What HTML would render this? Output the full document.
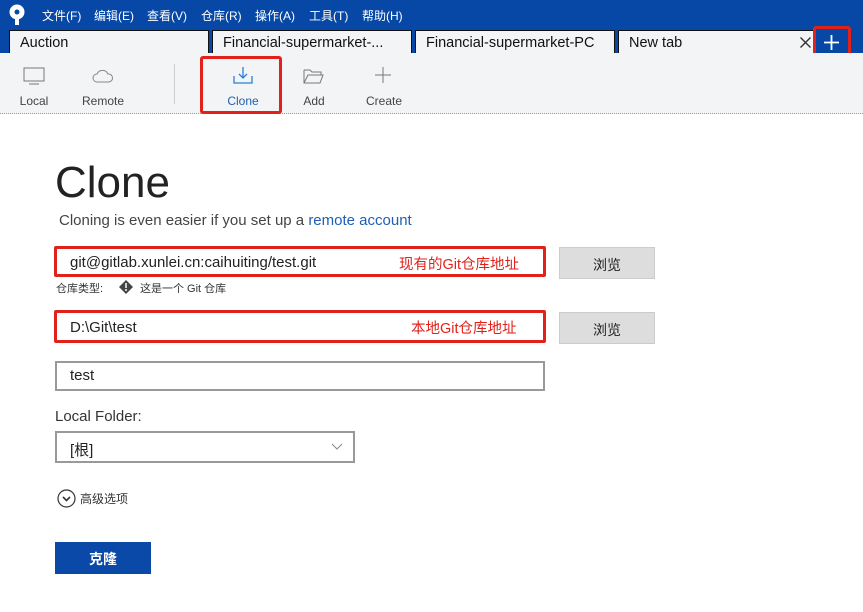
<!DOCTYPE html>
<html><head><meta charset="utf-8">
<style>
*{margin:0;padding:0;box-sizing:border-box}
body{width:863px;height:612px;background:#fff;font-family:"Liberation Sans","Noto Sans CJK SC",sans-serif;position:relative;overflow:hidden;color:#222}
.abs{position:absolute}
#top{left:0;top:0;width:863px;height:53px;background:#0747a6}
.menu{top:7px;font-size:12px;color:#fff}
.tab{top:30px;height:23px;background:#f3f4f6;border:1px solid #111;border-bottom:none;font-size:14.5px;padding:4px 0 0 10px;color:#111}
#tb{left:0;top:53px;width:863px;height:61px;background:#f3f4f6;border-bottom:1px dotted #999}
.tl{font-size:12px;color:#444;top:94px;text-align:center;width:60px}
.inp{border:2px solid #999;background:#fff;font-size:15px;padding:4px 0 0 13px;height:30px}
.red{border:3px solid #e0221b;border-radius:2px}
.btn{background:#ddd;border:1px solid #ccc;font-size:14px;text-align:center;padding-top:7px;width:96px;height:32px}
.ann{color:#e0221b;font-size:14.5px}
</style></head><body>
<div id="top" class="abs"></div>
<svg class="abs" style="left:8px;top:4px" width="18" height="22" viewBox="0 0 18 22"><circle cx="9" cy="8" r="7.5" fill="#fff"/><circle cx="9" cy="8" r="2.5" fill="#0747a6"/><rect x="7" y="13" width="4" height="8" fill="#fff"/></svg>
<div class="abs menu" style="left:42px">文件(F)</div>
<div class="abs menu" style="left:94px">编辑(E)</div>
<div class="abs menu" style="left:147px">查看(V)</div>
<div class="abs menu" style="left:201px">仓库(R)</div>
<div class="abs menu" style="left:255px">操作(A)</div>
<div class="abs menu" style="left:309px">工具(T)</div>
<div class="abs menu" style="left:362px">帮助(H)</div>
<div class="abs tab" style="left:9px;width:200px">Auction</div>
<div class="abs tab" style="left:212px;width:200px">Financial-supermarket-...</div>
<div class="abs tab" style="left:415px;width:200px">Financial-supermarket-PC</div>
<div class="abs tab" style="left:618px;width:197px;background:#f3f4f6">New tab</div>
<svg class="abs" style="left:800px;top:37px" width="11" height="11"><path d="M0.5 0.5l10 10M10.5 0.5l-10 10" stroke="#333" stroke-width="1.4"/></svg>
<div class="abs" style="left:813px;top:26px;width:38px;height:31px;border:3px solid #e0221b;border-radius:3px"></div>
<svg class="abs" style="left:824px;top:35px" width="15" height="15"><path d="M7.5 0v15M0 7.5h15" stroke="#fff" stroke-width="1.8"/></svg>
<div id="tb" class="abs"></div>
<svg class="abs" style="left:23px;top:67px" width="22" height="20"><rect x="1" y="1" width="20" height="13" fill="none" stroke="#777"/><line x1="6" y1="17" x2="16" y2="17" stroke="#777"/></svg>
<svg class="abs" style="left:92px;top:68px" width="22" height="16"><path d="M5 14 a4 4 0 0 1 0-8 a6 6 0 0 1 11 0 a4 4 0 0 1 1 8 z" fill="none" stroke="#888"/></svg>
<div class="abs tl" style="left:4px">Local</div>
<div class="abs tl" style="left:73px">Remote</div>
<div class="abs" style="left:174px;top:64px;width:1px;height:40px;background:#ccc"></div>
<div class="abs" style="left:200px;top:56px;width:82px;height:58px;border:3px solid #e0221b;border-radius:3px"></div>
<svg class="abs" style="left:233px;top:66px" width="20" height="18"><path d="M10 1v11M6 8l4 4 4-4M1 10v7h18v-7" fill="none" stroke="#2a7fd4" stroke-width="1.3"/></svg>
<div class="abs tl" style="left:213px;color:#1f5fb3">Clone</div>
<svg class="abs" style="left:303px;top:68px" width="22" height="16"><path d="M1 2h6l2 2h9v3M1 2v13h16l3-8H5l-4 8" fill="none" stroke="#777"/></svg>
<div class="abs tl" style="left:284px">Add</div>
<svg class="abs" style="left:374px;top:66px" width="18" height="18"><path d="M9 1v16M1 9h16" stroke="#777"/></svg>
<div class="abs tl" style="left:354px">Create</div>
<div class="abs" style="left:55px;top:158px;font-size:44px;color:#222">Clone</div>
<div class="abs" style="left:59px;top:212px;font-size:15px;color:#444">Cloning is even easier if you set up a <span style="color:#1f5fb3">remote account</span></div>
<div class="abs inp red" style="left:54px;top:246px;width:492px;height:31px;padding-top:5px">git@gitlab.xunlei.cn:caihuiting/test.git</div>
<div class="abs ann" style="left:399px;top:253px">现有的Git仓库地址</div>
<div class="abs btn" style="left:559px;top:247px">浏览</div>
<div class="abs" style="left:56px;top:280px;font-size:11px;color:#333">仓库类型:</div>
<svg class="abs" style="left:119px;top:280px" width="14" height="14"><path d="M7 0L14 7 7 14 0 7z" fill="#444"/><path d="M7 3v5" stroke="#fff" stroke-width="1.5"/><circle cx="7" cy="10" r="1" fill="#fff"/></svg>
<div class="abs" style="left:140px;top:280px;font-size:11px;color:#333">这是一个 Git 仓库</div>
<div class="abs inp red" style="left:54px;top:310px;width:492px;height:33px;padding-top:6px">D:\Git\test</div>
<div class="abs ann" style="left:411px;top:317px">本地Git仓库地址</div>
<div class="abs btn" style="left:559px;top:312px">浏览</div>
<div class="abs inp" style="left:55px;top:361px;width:490px">test</div>
<div class="abs" style="left:55px;top:408px;font-size:15px;color:#333">Local Folder:</div>
<div class="abs inp" style="left:55px;top:431px;width:300px;height:32px;padding-top:6px">[根]</div>
<svg class="abs" style="left:331px;top:443px" width="12" height="8"><path d="M1 1l5 5 5-5" fill="none" stroke="#888"/></svg>
<svg class="abs" style="left:57px;top:489px" width="19" height="19"><circle cx="9.5" cy="9.5" r="8.5" fill="none" stroke="#333" stroke-width="1.2"/><path d="M6 8l3.5 3.5L13 8" fill="none" stroke="#333" stroke-width="1.6"/></svg>
<div class="abs" style="left:80px;top:490px;font-size:12px;color:#333">高级选项</div>
<div class="abs" style="left:55px;top:542px;width:96px;height:32px;background:#0a49a8;color:#fff;font-size:14px;font-weight:bold;text-align:center;padding-top:7px">克隆</div>
</body></html>
